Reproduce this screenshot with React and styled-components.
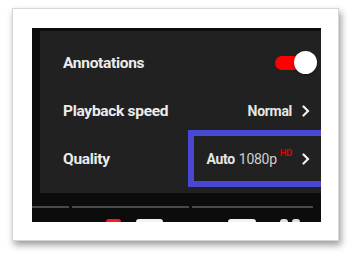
import React from 'react';
import styled, { createGlobalStyle } from 'styled-components';

const GlobalStyle = createGlobalStyle`
  html, body {
    margin: 0;
    background: #ffffff;
    font-family: Roboto, 'Liberation Sans', Arial, sans-serif;
  }
`;

const Page = styled.div`
  width: 353px;
  height: 258px;
  padding: 8px 0 0 12px;
  box-sizing: border-box;
`;

const Frame = styled.div`
  width: 327px;
  height: 233px;
  box-sizing: border-box;
  padding: 19px 17px 0 19px;
  background: #ffffff;
  border: 1px solid #d6d6d6;
  box-shadow: 2px 4px 7px rgba(0, 0, 0, 0.4);
`;

const Player = styled.div`
  position: relative;
  width: 289px;
  height: 194px;
  background: #0c0c0c;
  overflow: hidden;
  display: flex;
  flex-direction: column;
  & > * {
    flex-shrink: 0;
  }
`;

const Menu = styled.div`
  margin: 3px 0 0 8px;
  height: 162px;
  box-sizing: border-box;
  padding-top: 8px;
  background: #212121;
`;

const Row = styled.div`
  height: 48px;
  display: flex;
  align-items: center;
  justify-content: space-between;
  padding: 0 11px 0 23px;
`;

const Label = styled.span`
  color: #ececec;
  font-size: 15.5px;
  font-weight: 700;
  letter-spacing: -0.3px;
`;

const Value = styled.span`
  display: flex;
  align-items: center;
  color: #e6e6e6;
  font-size: 14px;
  font-weight: 700;
  letter-spacing: -0.3px;
`;

const Light = styled.span`
  margin-left: 4px;
  font-weight: 400;
  color: #d0d0d0;
`;

const Hd = styled.span`
  margin-left: 3px;
  font-size: 9.5px;
  font-weight: 700;
  line-height: 1;
  color: #e00000;
  align-self: flex-start;
  margin-top: -3px;
`;

const Chevron = styled.svg`
  margin-left: 10px;
  width: 8px;
  height: 12px;
`;

const Toggle = styled.div`
  position: relative;
  width: 42px;
  height: 24px;
  margin-right: -7px;
  display: flex;
  align-items: center;
`;

const Track = styled.div`
  width: 32px;
  height: 14px;
  border-radius: 7px;
  background: #ff0000;
`;

const Knob = styled.div`
  position: absolute;
  right: 0;
  top: 0;
  width: 23px;
  height: 23px;
  border-radius: 50%;
  background: #ffffff;
  box-shadow: 0 1px 2px rgba(0, 0, 0, 0.4);
`;

const Highlight = styled.div`
  position: absolute;
  left: 156px;
  top: 102px;
  width: 160px;
  height: 45px;
  border: 6px solid #4848d4;
`;

const Progress = styled.div`
  display: flex;
  gap: 3px;
  margin: 13px 8px 0 0;
`;

const Segment = styled.div`
  flex: ${p => p.grow};
  height: 2px;
  background: #4a4a4a;
`;

const Controls = styled.div`
  position: relative;
  height: 10px;
  margin-top: 11px;
`;

const Ctl = styled.div`
  position: absolute;
  top: 0;
  left: ${p => p.x}px;
  width: ${p => p.w}px;
  height: 12px;
  border-radius: 3px 3px 0 0;
  background: ${p => p.color};
`;

const Arrow = () => (
  <Chevron viewBox="0 0 8 12">
    <path d="M1.5 1.5 L6 6 L1.5 10.5" fill="none" stroke="#f2f2f2" strokeWidth="2.2" strokeLinecap="round" />
  </Chevron>
);

export default function App() {
  return (
    <>
      <GlobalStyle />
      <Page>
        <Frame>
          <Player>
            <Menu>
              <Row>
                <Label>Annotations</Label>
                <Toggle>
                  <Track />
                  <Knob />
                </Toggle>
              </Row>
              <Row>
                <Label>Playback speed</Label>
                <Value>
                  Normal
                  <Arrow />
                </Value>
              </Row>
              <Row>
                <Label>Quality</Label>
                <Value>
                  Auto<Light>1080p</Light>
                  <Hd>HD</Hd>
                  <Arrow />
                </Value>
              </Row>
            </Menu>
            <Progress>
              <Segment grow={37} />
              <Segment grow={117} />
              <Segment grow={121} />
            </Progress>
            <Controls>
              <Ctl x={74} w={15} color="#ff1a1a" />
              <Ctl x={104} w={27} color="#f4f4f4" />
              <Ctl x={196} w={28} color="#f4f4f4" />
              <Ctl x={248} w={8} color="#e0e0e0" />
              <Ctl x={260} w={8} color="#e0e0e0" />
            </Controls>
            <Highlight />
          </Player>
        </Frame>
      </Page>
    </>
  );
}
